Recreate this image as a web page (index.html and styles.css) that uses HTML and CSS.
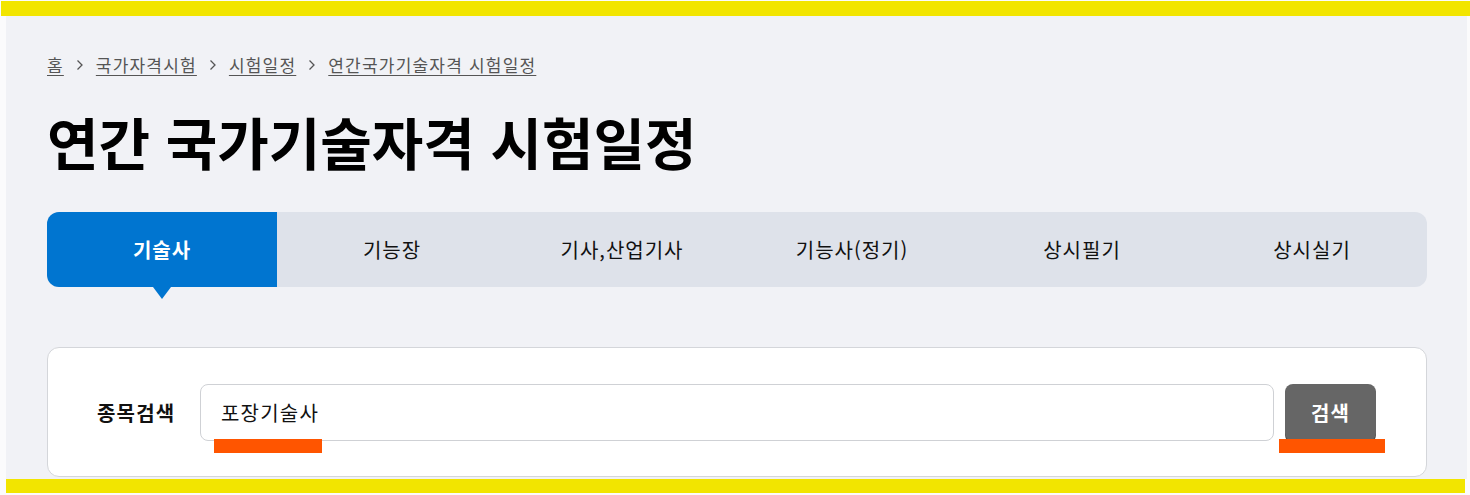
FILE: index.html
```html
<!DOCTYPE html>
<html lang="ko">
<head>
<meta charset="utf-8">
<title>연간 국가기술자격 시험일정</title>
<link rel="stylesheet" href="styles.css">
</head>
<body>
<div class="bar-top"></div>
<main class="page">
  <nav class="crumbs">
    <a href="#">홈</a>
    <svg class="sep" viewBox="0 0 8 12" width="8" height="12"><path d="M1.5 1.5 L6 6 L1.5 10.5" fill="none" stroke="#555" stroke-width="1.3"/></svg>
    <a href="#">국가자격시험</a>
    <svg class="sep" viewBox="0 0 8 12" width="8" height="12"><path d="M1.5 1.5 L6 6 L1.5 10.5" fill="none" stroke="#555" stroke-width="1.3"/></svg>
    <a href="#">시험일정</a>
    <svg class="sep" viewBox="0 0 8 12" width="8" height="12"><path d="M1.5 1.5 L6 6 L1.5 10.5" fill="none" stroke="#555" stroke-width="1.3"/></svg>
    <a href="#">연간국가기술자격 시험일정</a>
  </nav>
  <h1 class="title">연간 국가기술자격 시험일정</h1>
  <ul class="tabs">
    <li class="tab active">기술사</li>
    <li class="tab">기능장</li>
    <li class="tab">기사,산업기사</li>
    <li class="tab">기능사(정기)</li>
    <li class="tab">상시필기</li>
    <li class="tab">상시실기</li>
  </ul>
  <section class="search">
    <label class="search-label">종목검색</label>
    <div class="field">
      <div class="input">포장기술사</div>
      <span class="mark mark-input"></span>
    </div>
    <div class="btn-wrap">
      <button class="btn">검색</button>
      <span class="mark mark-btn"></span>
    </div>
  </section>
</main>
<div class="bar-bottom"></div>
</body>
</html>
```

FILE: styles.css
```css
* { box-sizing: border-box; }
html, body { margin: 0; padding: 0; background: #fbfbfc; }
body {
  font-family: "Noto Sans CJK KR", "Noto Sans", sans-serif;
  color: #111;
  width: 1470px;
  height: 495px;
  overflow: hidden;
}
.bar-top {
  height: 15px;
  margin: 1px 0 0 1px;
  background: #f2e500;
}
.page {
  height: 463px;
  margin: 0 3px 0 6px;
  background: #f1f2f6;
  padding: 37px 40px 0 41px;
  overflow: hidden;
}
.bar-bottom {
  height: 14px;
  margin: 0 5px 0 6px;
  background: #f2e500;
}
.crumbs {
  display: flex;
  align-items: center;
  gap: 12px;
  font-size: 17px;
  line-height: 24px;
  letter-spacing: 1.2px;
}
.crumbs a {
  color: #555;
  text-decoration: underline;
  text-underline-offset: 3px;
}
.sep { display: block; }
.title {
  margin: 29px 0 0;
  font-size: 56px;
  line-height: 70px;
  font-weight: 700;
  letter-spacing: 0;
  color: #000;
}
.tabs {
  list-style: none;
  margin: 36px 0 0;
  padding: 0;
  display: grid;
  grid-template-columns: repeat(6, 1fr);
  height: 75px;
  background: #dee2ea;
  border-radius: 12px;
}
.tab {
  position: relative;
  display: flex;
  align-items: center;
  justify-content: center;
  font-size: 20px;
  letter-spacing: 1px;
  color: #111;
}
.tab.active {
  background: #0075d0;
  color: #fff;
  font-weight: 700;
  border-radius: 12px 0 0 12px;
}
.tab.active::after {
  content: "";
  position: absolute;
  left: 50%;
  bottom: -12px;
  margin-left: -9px;
  border-left: 9px solid transparent;
  border-right: 9px solid transparent;
  border-top: 12px solid #0075d0;
}
.search {
  margin-top: 60px;
  height: 130px;
  background: #fff;
  border: 1px solid #d4d6da;
  border-radius: 12px;
  display: flex;
  align-items: center;
  padding: 0 50px 0 49px;
}
.search-label {
  width: 103px;
  font-size: 20px;
  font-weight: 700;
  letter-spacing: 1.2px;
  color: #111;
  flex: none;
}
.field {
  position: relative;
  flex: 1;
}
.input {
  height: 57px;
  border: 1px solid #cfd1d5;
  border-radius: 8px;
  padding: 0 20px;
  display: flex;
  align-items: center;
  font-size: 20px;
  letter-spacing: 1.2px;
  color: #111;
  background: #fff;
}
.btn-wrap {
  position: relative;
  margin-left: 11px;
  flex: none;
}
.btn {
  display: block;
  width: 91px;
  height: 57px;
  border: 0;
  border-radius: 8px;
  background: #666;
  color: #fff;
  font-family: inherit;
  font-size: 20px;
  font-weight: 700;
  letter-spacing: 1px;
  box-shadow: 0 2px 0 #4a4a4a;
}
.mark {
  position: absolute;
  height: 14px;
  background: #ff5500;
  top: 55px;
}
.mark-input { left: 14px; width: 108px; }
.mark-btn { left: -6px; width: 106px; }
```
